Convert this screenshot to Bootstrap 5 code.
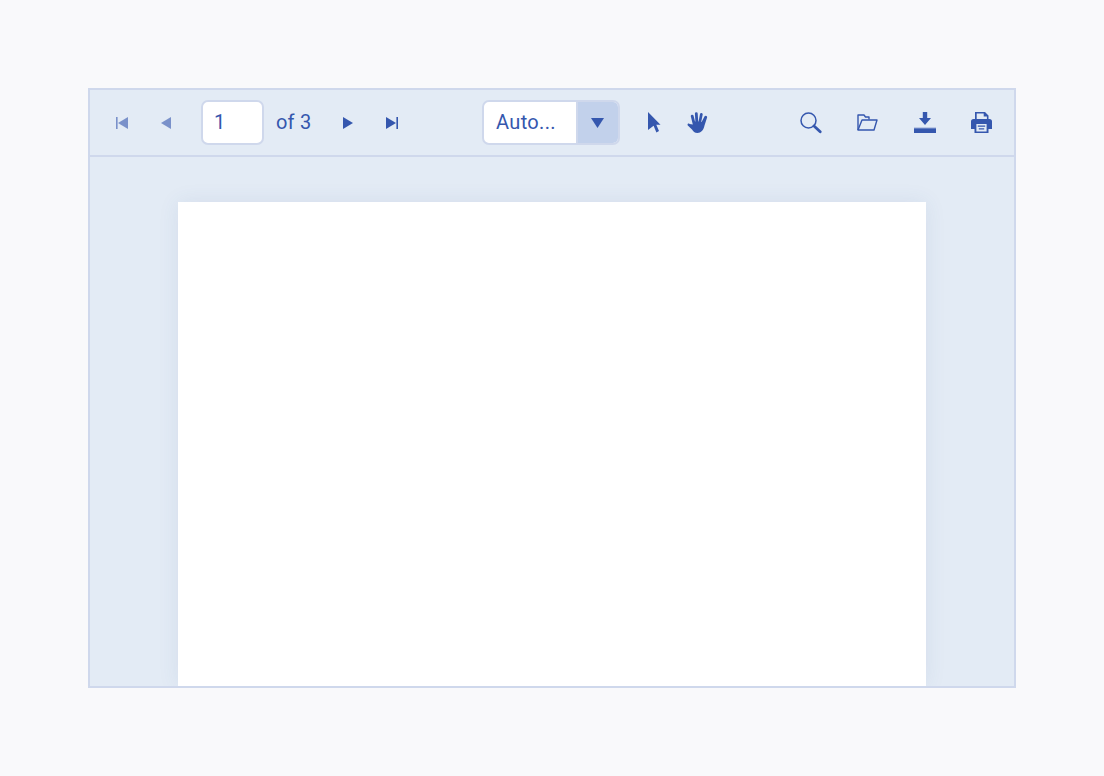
<!DOCTYPE html>
<html lang="en">
<head>
<meta charset="utf-8">
<title>PDF Viewer</title>
<link href="https://cdn.jsdelivr.net/npm/bootstrap@5.3.0/dist/css/bootstrap.min.css" rel="stylesheet">
<style>
html,body{height:100%}
body{background:#f9f9fb;font-family:Roboto,"Liberation Sans",sans-serif;color:#3557ae}
.stage{padding:88px 88px 88px;height:776px}
.viewer{width:928px;height:600px;background:#e3ebf5;border:2px solid #cfd8ec;overflow:hidden}
.tools{height:67px;border-bottom:2px solid #cfd8ec;padding-left:10px;padding-right:4px;flex:none}
.tbtn{width:44px;height:44px;padding:0;border:0;background:transparent;display:flex;align-items:center;justify-content:center;color:#3557ae}
.tbtn.off svg{opacity:.6}
.tbtn.wide{width:57px}
.pageno{width:63px;height:45px;margin:0 12px 0 13px;font-size:20px;letter-spacing:.2px;color:#3557ae;border:2px solid #cfd8ec;border-radius:7px;padding:0 11px 2px;background:#fff;box-shadow:none}
.ofcount{font-size:20px;width:35px;margin-right:15px;margin-bottom:2px;white-space:nowrap;letter-spacing:.2px}
.zoomsel{width:138px;height:45px;margin-left:68px;margin-right:12px;border:2px solid #cfd8ec;border-radius:7px;overflow:hidden;background:#fff}
.zoomval{width:94px;font-size:20px;padding-left:12px;line-height:40px;border-right:2px solid #cfd8ec;white-space:nowrap;letter-spacing:.35px}
.zoomarrow{flex:1;background:#c2d1eb;display:flex;align-items:center;justify-content:center;padding-right:2px}
.canvas{flex:1;padding:45px 88px 0;min-height:0}
.sheet{width:748px;height:100%;background:#fff;box-shadow:0 0 20px rgba(60,90,140,.09)}
</style>
</head>
<body>
<div class="stage">
  <div class="viewer d-flex flex-column">
    <div class="tools d-flex align-items-center">
      <button class="tbtn off" aria-label="First page"><svg width="12" height="12" viewBox="0 0 12 12" fill="currentColor"><rect x="0" y="0" width="1.600" height="12"/><path d="M12 0v12L2 6z"/></svg></button>
      <button class="tbtn off" aria-label="Previous page"><svg width="10" height="12" viewBox="0 0 10 12" fill="currentColor"><path d="M10 0v12L0 6z"/></svg></button>
      <input class="form-control pageno" value="1" aria-label="Page">
      <span class="ofcount">of 3</span>
      <button class="tbtn" aria-label="Next page"><svg width="10" height="12" viewBox="0 0 10 12" fill="currentColor"><path d="M0 0v12l10-6z"/></svg></button>
      <button class="tbtn" aria-label="Last page"><svg width="12" height="12" viewBox="0 0 12 12" fill="currentColor"><path d="M0 0v12l10-6z"/><rect x="10.400" y="0" width="1.600" height="12"/></svg></button>
      <div class="zoomsel d-flex">
        <div class="zoomval">Auto...</div>
        <div class="zoomarrow"><svg width="13" height="10" viewBox="0 0 13 10" fill="currentColor"><path d="M0 0h13L6.500 10z"/></svg></div>
      </div>
      <button class="tbtn" aria-label="Select"><svg width="13" height="21" viewBox="0 0 13 21" fill="currentColor"><path d="M0 0l12.500 12.800H8.300l2.700 6.200-2.600 1.500-2.800-6.800L0 18z"/></svg></button>
      <button class="tbtn" aria-label="Pan"><svg width="22" height="21" viewBox="0 0 22 21" fill="currentColor"><path d="M5.800 12.500L3.800 4.300a1.400 1.400 0 0 1 2.700-.7L8 9.600h.4L7.900 1.600a1.400 1.400 0 0 1 2.800 0L11.200 9.500h.4L13 1.900a1.400 1.400 0 0 1 2.700.6L14.200 10h.4L17.600 4.300a1.400 1.400 0 0 1 2.400 1.400L17.500 13.500c-1 4.700-3.500 7.500-7 7.500-3 0-4.300-1.500-5.500-3.400L.8 13.400c-.9-1.100.6-2.500 1.700-1.500z"/></svg></button>
      <div class="ms-auto d-flex">
        <button class="tbtn wide" aria-label="Search"><svg width="22" height="22" viewBox="0 0 22 22" fill="none" stroke="currentColor"><circle cx="8.500" cy="8.500" r="7.500" stroke-width="1.500"/><path d="M14 14l6.200 5.800" stroke-width="2.800" stroke-linecap="round"/></svg></button>
        <button class="tbtn wide" aria-label="Open"><svg width="21" height="17" viewBox="0 0 21 17" fill="none" stroke="currentColor" stroke-width="1.400" stroke-linejoin="round"><path d="M1 16V1h6l1.500 2H12v2.500"/><path d="M5 6h15L17 16H1z"/></svg></button>
        <button class="tbtn wide" aria-label="Download"><svg width="22" height="21" viewBox="0 0 22 21" fill="currentColor"><path d="M8.800 0h4.400v6H17l-6 7-6-7h3.800z"/><rect x="0" y="15.500" width="22" height="1.500" opacity=".45"/><rect x="0" y="16.500" width="22" height="4.500"/></svg></button>
        <button class="tbtn wide" aria-label="Print"><svg width="21" height="21" viewBox="0 0 21 21"><path fill="currentColor" d="M4 7V0h10l3.500 3.500V7h1A2.500 2.500 0 0 1 21 9.500V17h-3.500v4h-14v-4H0V9.500A2.500 2.500 0 0 1 2.500 7z"/><path fill="#e3ebf5" d="M5.700 1.600h7v3h3.200v2.400H5.700zM5.400 12h10.200v7.400H5.400z"/><path fill="currentColor" d="M6.800 13.500h7.400v1.200H6.800zM7.800 16.300h5.400v1.200H7.800z"/></svg></button>
      </div>
    </div>
    <div class="canvas">
      <div class="sheet"></div>
    </div>
  </div>
</div>
<script src="https://cdn.jsdelivr.net/npm/bootstrap@5.3.0/dist/js/bootstrap.bundle.min.js"></script>
</body>
</html>
